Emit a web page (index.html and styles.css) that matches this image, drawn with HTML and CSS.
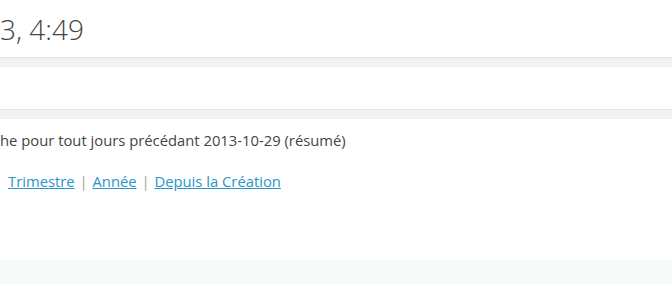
FILE: index.html
```html
<!DOCTYPE html>
<html lang="fr">
<head>
  <meta charset="UTF-8">
  <title>Statistiques</title>
  <link rel="stylesheet" href="styles.css">
</head>
<body>
  <header class="entete">
    <h1 class="titre">3, 4:49</h1>
  </header>
  <div class="bande"></div>
  <div class="barre"></div>
  <div class="bande"></div>
  <div class="contenu">
    <p class="resume">he pour tout jours précédant 2013-10-29 (résumé)</p>
    <p class="periodes">
      <a href="#">Trimestre</a> <span class="sep">|</span>
      <a href="#">Année</a> <span class="sep">|</span>
      <a href="#">Depuis la Création</a>
    </p>
  </div>
  <footer class="pied"></footer>
</body>
</html>
```

FILE: styles.css
```css
body { font-family: "Open Sans", Arial, sans-serif; margin: 0; background: #fff; color: #444; }
.entete { height: 57px; box-sizing: border-box; padding-top: 9px; }
.titre { margin: 0; font-size: 28px; font-weight: 300; line-height: 40px; color: #444; }
.bande { height: 10px; background: #f1f1f1; border-top: 1px solid #e4e4e4; box-sizing: border-box; }
.barre { height: 42px; background: #fff; }
.contenu { height: 141px; box-sizing: border-box; padding-top: 11px; }
.resume { margin: 0; font-size: 14.8px; line-height: 20px; }
.periodes { margin: 21px 0 0; padding-left: 8px; font-size: 14.8px; line-height: 20px; }
.periodes a { color: #2a95c8; text-decoration: underline; }
.sep { color: #a0a0a0; margin: 0 1px; }
.pied { height: 24px; background: #f7fafb; }
```
